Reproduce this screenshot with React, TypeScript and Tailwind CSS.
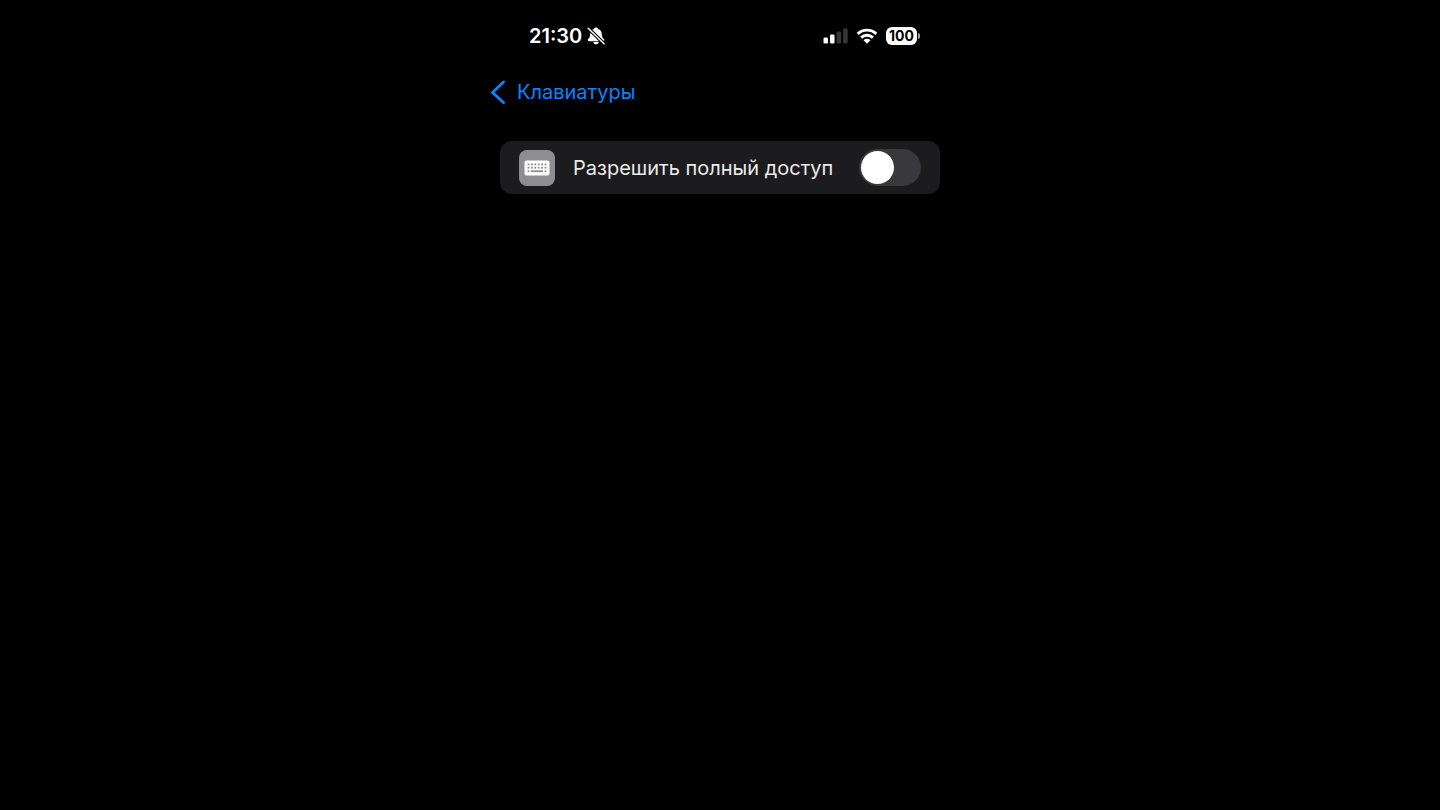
import { useState } from "react";

function BellOffIcon() {
  return (
    <svg viewBox="0 0 18 18" className="w-[18px] h-[18px]" aria-hidden="true">
      <path
        d="M9 .5c1.100 0 1.900.6 2.100 1.500 2.400.8 3.600 2.500 3.700 4.900.1 2.900.7 3.700 1.800 4.800.5.5.7.9.7 1.400 0 .7-.6 1.100-1.400 1.100H2.100c-.8 0-1.400-.4-1.400-1.100 0-.5.2-.9.7-1.400 1.100-1.100 1.700-1.900 1.800-4.800C3.300 4.500 4.500 2.800 6.900 2 7.100 1.100 7.900.5 9 .5zM6.300 15h5.400c-.2 1.500-1.300 2.300-2.700 2.300S6.500 16.500 6.300 15z"
        fill="#fff"
      />
      <path d="M1.200 1.200l15.800 15.600" stroke="#000" strokeWidth="3.600" />
      <path
        d="M1.200 1.200l15.800 15.600"
        stroke="#fff"
        strokeWidth="1.500"
        strokeLinecap="round"
      />
    </svg>
  );
}

function SignalIcon() {
  return (
    <svg viewBox="0 0 25 16" className="w-[25px] h-4" aria-hidden="true">
      <rect x="0.500" y="9.500" width="4.500" height="6" rx="1.200" fill="#fff" />
      <rect x="7" y="6.500" width="4.500" height="9" rx="1.200" fill="#fff" />
      <rect x="13.600" y="3.500" width="4.500" height="12" rx="1.200" fill="#363636" />
      <rect x="20.200" y="0.500" width="4.500" height="15" rx="1.200" fill="#363636" />
    </svg>
  );
}

function WifiIcon() {
  return (
    <svg viewBox="0 0 22 16" className="w-[22px] h-4" aria-hidden="true">
      <g fill="none" stroke="#fff" strokeWidth="2.900">
        <path d="M1.700 5.900a13.300 13.300 0 0 1 18.600 0" />
        <path d="M5.100 9.600a8.400 8.400 0 0 1 11.800 0" />
      </g>
      <path d="M7.500 12.200a5 5 0 0 1 7 0L11 15.700z" fill="#fff" />
    </svg>
  );
}

function KeyboardIcon() {
  const keys = [0, 1, 2, 3, 4, 5];
  return (
    <svg viewBox="0 0 26 16" className="w-[26px] h-4" aria-hidden="true">
      <rect x="0.500" y="0.500" width="25" height="15" rx="2" fill="#fff" />
      <g fill="#8e8e90">
        {keys.map((key) => (
          <g key={key}>
            <rect x={3.6 + key * 3.4} y="3.500" width="1.800" height="1.800" />
            <rect x={3.6 + key * 3.4} y="6.800" width="1.800" height="1.800" />
          </g>
        ))}
        <rect x="3.600" y="10.300" width="1.800" height="1.800" />
        <rect x="7" y="10.300" width="12" height="1.800" />
        <rect x="20.600" y="10.300" width="1.800" height="1.800" />
      </g>
    </svg>
  );
}

function StatusBar() {
  return (
    <div className="flex items-center justify-between pl-[49px] pr-10 pt-6">
      <div className="flex items-center gap-[5px]">
        <time className="text-xl leading-6 font-semibold">21:30</time>
        <BellOffIcon />
      </div>
      <div className="flex items-center gap-2">
        <SignalIcon />
        <WifiIcon />
        <div className="flex items-center gap-px">
          <span className="w-[31px] h-[18px] rounded-md bg-white text-center text-sm leading-[18px] font-bold text-black">
            100
          </span>
          <span className="w-0.5 h-1.5 rounded-r-full bg-[#9a9a9a]" />
        </div>
      </div>
    </div>
  );
}

export default function App() {
  const [fullAccess, setFullAccess] = useState(false);

  return (
    <div className="min-h-screen bg-black text-white font-[Inter,sans-serif]">
      <main className="w-full max-w-[480px] mx-auto">
        <StatusBar />

        <nav className="mt-8 flex px-2.5">
          <a
            href="#keyboards"
            className="flex items-center gap-[11px] text-xl leading-6 text-[#0a84ff]"
          >
            <svg viewBox="0 0 16 24" className="w-4 h-6" aria-hidden="true">
              <path
                d="M13.500 2L2.500 12.500l11 10"
                fill="none"
                stroke="currentColor"
                strokeWidth="2.800"
                strokeLinecap="round"
                strokeLinejoin="round"
              />
            </svg>
            Клавиатуры
          </a>
        </nav>

        <section className="mt-[37px] mx-5 flex items-center rounded-xl bg-[#1c1c1e] px-[19px] py-2">
          <span className="flex size-9 items-center justify-center rounded-lg bg-[#8e8e90]">
            <KeyboardIcon />
          </span>
          <label
            htmlFor="full-access"
            className="ml-[18px] flex-1 text-xl leading-6 text-[#ebebeb]"
          >
            Разрешить полный доступ
          </label>
          <input
            id="full-access"
            type="checkbox"
            role="switch"
            checked={fullAccess}
            onChange={(e) => setFullAccess(e.target.checked)}
            className="flex h-[37px] w-[62px] shrink-0 cursor-pointer appearance-none items-center rounded-full bg-[#39393d] p-0.5 before:size-[33px] before:rounded-full before:bg-white before:transition-transform checked:bg-[#30d158] checked:before:translate-x-[25px]"
          />
        </section>
      </main>
    </div>
  );
}
